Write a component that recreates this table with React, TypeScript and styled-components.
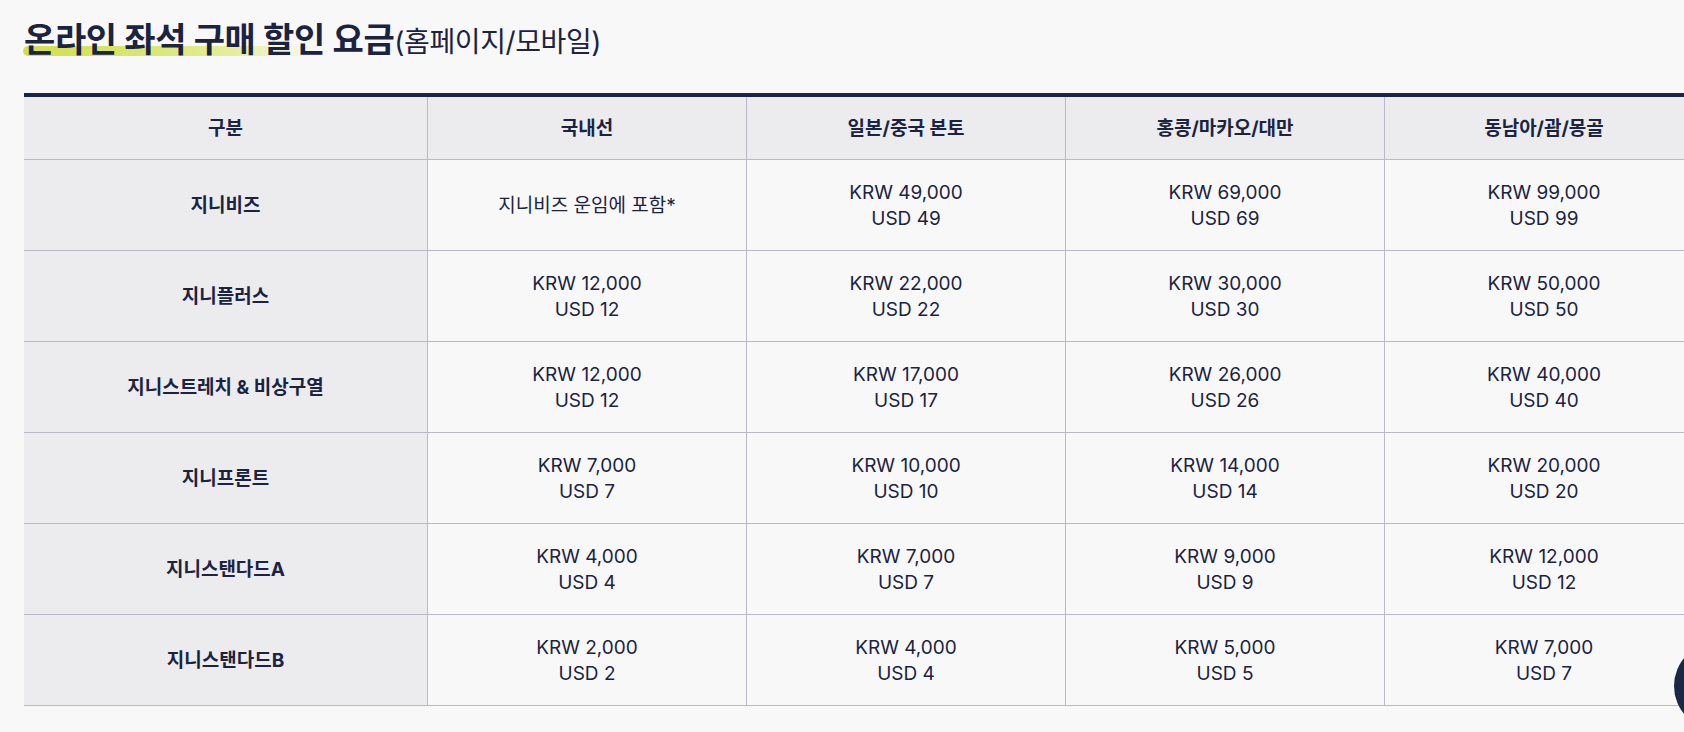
import React from "react";
import styled, { createGlobalStyle } from "styled-components";

const GlobalStyle = createGlobalStyle`
  html, body {
    margin: 0;
    padding: 0;
    background: #f8f8f9;
    overflow: hidden;
  }
  body {
    font-family: Inter, "Noto Sans CJK KR", "Noto Sans", sans-serif;
    color: #1b2341;
  }
  * { box-sizing: border-box; }
`;

const Page = styled.main`
  width: 1684px;
  height: 732px;
  padding: 17px 0 0 24px;
  overflow: hidden;
`;

const Title = styled.h2`
  margin: 0;
  height: 46px;
  font-size: 34px;
  line-height: 46px;
  font-weight: 700;
  letter-spacing: -0.4px;
  color: #1b2341;
  white-space: nowrap;
`;

const Marked = styled.span`
  position: relative;
  z-index: 0;
  &::before {
    content: "";
    position: absolute;
    z-index: -1;
    left: -1px;
    right: 0;
    bottom: 4px;
    height: 10px;
    border-radius: 5px 0 0 5px;
    background: linear-gradient(90deg, #d2df4c 0%, #dbe674 35%, #e6ee9f 58%, rgba(240, 244, 205, 0.7) 70%, rgba(248, 248, 249, 0) 82%);
  }
`;

const Sub = styled.span`
  font-size: 28px;
  font-weight: 400;
  letter-spacing: -0.4px;
`;

const Table = styled.table`
  margin-top: 30px;
  width: 1680px;
  table-layout: fixed;
  border-collapse: separate;
  border-spacing: 0;
  border-top: 4px solid #1b2547;
`;

const HeadCell = styled.th`
  height: 63px;
  background: #ececef;
  border-bottom: 1px solid #b9bac6;
  border-right: 1px solid #b9bac6;
  font-size: 19px;
  line-height: 26px;
  font-weight: 700;
  text-align: center;
  vertical-align: middle;
  padding: 2px 0 0;
`;

const RowHead = styled.th`
  height: 91px;
  background: #ececef;
  border-bottom: 1px solid #b9bac6;
  border-right: 1px solid #b9bac6;
  font-size: 19px;
  line-height: 26px;
  font-weight: 700;
  text-align: center;
  vertical-align: middle;
  padding: 2px 0 0;
`;

const Cell = styled.td`
  height: 91px;
  background: #f8f8f9;
  border-bottom: 1px solid #b9bac6;
  border-right: 1px solid #b9bac6;
  font-size: 19px;
  line-height: 26px;
  font-weight: 400;
  text-align: center;
  vertical-align: middle;
  padding: 2px 0 0;
`;

const Line = styled.span`
  display: block;
`;

const FloatButton = styled.div`
  position: fixed;
  right: -78px;
  bottom: 2px;
  width: 88px;
  height: 88px;
  border-radius: 50%;
  background: #1b2747;
`;

const heads = ["구분", "국내선", "일본/중국 본토", "홍콩/마카오/대만", "동남아/괌/몽골"];

type Row = { name: string; cells: (string | [number, number])[] };

const rows: Row[] = [
  { name: "지니비즈", cells: ["지니비즈 운임에 포함*", [49000, 49], [69000, 69], [99000, 99]] },
  { name: "지니플러스", cells: [[12000, 12], [22000, 22], [30000, 30], [50000, 50]] },
  { name: "지니스트레치 & 비상구열", cells: [[12000, 12], [17000, 17], [26000, 26], [40000, 40]] },
  { name: "지니프론트", cells: [[7000, 7], [10000, 10], [14000, 14], [20000, 20]] },
  { name: "지니스탠다드A", cells: [[4000, 4], [7000, 7], [9000, 9], [12000, 12]] },
  { name: "지니스탠다드B", cells: [[2000, 2], [4000, 4], [5000, 5], [7000, 7]] },
];

const fmt = (n: number) => n.toLocaleString("en-US");

export default function App() {
  return (
    <>
      <GlobalStyle />
      <Page>
        <Title>
          <Marked>온라인 좌석 구매 할인 요금</Marked>
          <Sub>(홈페이지/모바일)</Sub>
        </Title>
        <Table>
          <colgroup>
            <col style={{ width: 404 }} />
            <col style={{ width: 319 }} />
            <col style={{ width: 319 }} />
            <col style={{ width: 319 }} />
            <col style={{ width: 319 }} />
          </colgroup>
          <thead>
            <tr>
              {heads.map((h) => (
                <HeadCell key={h}>{h}</HeadCell>
              ))}
            </tr>
          </thead>
          <tbody>
            {rows.map((r) => (
              <tr key={r.name}>
                <RowHead scope="row">{r.name}</RowHead>
                {r.cells.map((c, i) => (
                  <Cell key={i}>
                    {typeof c === "string" ? (
                      c
                    ) : (
                      <>
                        <Line>KRW {fmt(c[0])}</Line>
                        <Line>USD {c[1]}</Line>
                      </>
                    )}
                  </Cell>
                ))}
              </tr>
            ))}
          </tbody>
        </Table>
      </Page>
      <FloatButton />
    </>
  );
}
